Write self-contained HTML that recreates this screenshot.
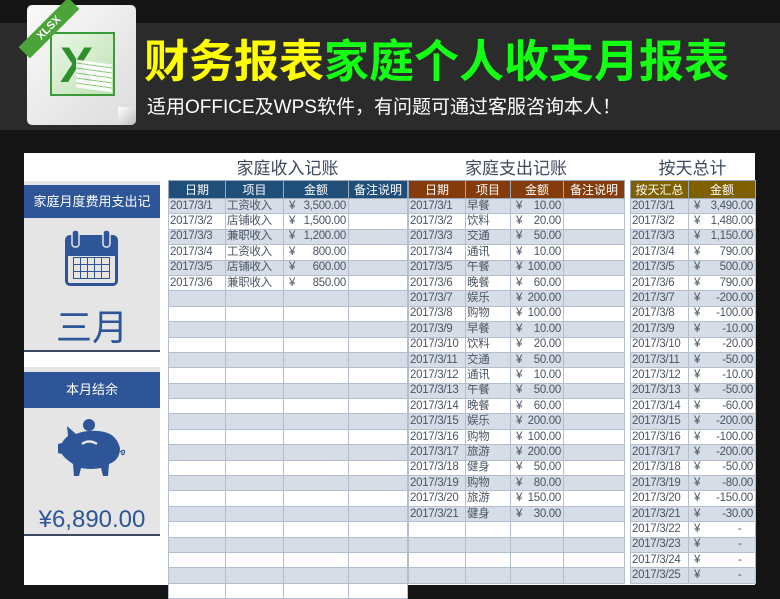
<!DOCTYPE html>
<html><head><meta charset="utf-8"><style>
*{margin:0;padding:0;box-sizing:border-box}
body{width:780px;height:585px;overflow:hidden;background:#151515;font-family:"Liberation Sans","Noto Sans CJK SC",sans-serif;position:relative}
.band{position:absolute;left:0;top:23px;width:780px;height:107px;background:#2b2b2b}
.abs{position:absolute}
table{border-collapse:collapse;table-layout:fixed;position:absolute;font-size:11.5px;letter-spacing:-0.3px;color:#4a5564}
td{height:15.4px;border:1px solid #b3bfcf;padding:0 1px;white-space:nowrap;line-height:13px;overflow:hidden}
th{height:17px;border:1px solid #9aa8ba;color:#fff;font-weight:normal;font-size:12px;letter-spacing:0}
tr:nth-child(even) td{background:#d6dde6}
tr:nth-child(odd) td{background:#fff}
.r{text-align:right;padding-right:2px}
.y{float:left;padding-left:4px}
.ttl{position:absolute;top:154px;font-size:17px;color:#3d4a5c;text-align:center}
</style></head><body>
<div class="band"></div>
<div class="abs" style="left:27px;top:5px;width:109px;height:120px;background:linear-gradient(135deg,#fafafa,#dcdcdc);border-radius:5px"></div>
<div class="abs" style="left:50px;top:32px;width:65px;height:64px;background:linear-gradient(135deg,#eaf6e6,#bfe2b2);border:2px solid #3d9a3a"></div>
<div class="abs" style="left:60px;top:36px;font:bold 50px 'Liberation Sans',sans-serif;color:#2f8f2a">X</div>
<div class="abs" style="left:76px;top:62px;width:36px;height:28px;background:repeating-linear-gradient(0deg,#fff 0 4px,#8cc67f 4px 5px);transform:skewY(8deg);opacity:.9"></div>
<div class="abs" style="left:14px;top:20px;width:70px;height:16px;background:#4aa43a;transform:rotate(-45deg);color:#fff;font:bold 11px 'Liberation Sans',sans-serif;text-align:center;line-height:16px">XLSX</div>
<div class="abs" style="left:118px;top:107px;width:18px;height:18px;background:linear-gradient(135deg,#fff,#bdbdbd);border-radius:0 0 5px 0"></div>
<div class="abs" style="left:144px;top:32px;font-size:45px;font-weight:bold;line-height:60px;white-space:nowrap"><span style="color:#ffff00">财务报表</span><span style="color:#13ff13">家庭个人收支月报表</span></div>
<div class="abs" style="left:147px;top:92px;font-size:19px;color:#fff;white-space:nowrap">适用OFFICE及WPS软件，有问题可通过客服咨询本人！</div>
<div class="abs" style="left:24px;top:153px;width:731px;height:432px;background:#fff"></div>
<div class="ttl" style="left:168px;width:239px">家庭收入记账</div>
<div class="ttl" style="left:408px;width:216px">家庭支出记账</div>
<div class="ttl" style="left:630px;width:125px">按天总计</div>
<div class="abs" style="left:24px;top:181px;width:136px;height:170px;background:#e5e5e5"></div>
<div class="abs" style="left:24px;top:185px;width:136px;height:33px;background:#2d5597;color:#fff;font-size:13px;text-align:center;line-height:33px">家庭月度费用支出记</div>
<svg class="abs" style="left:64px;top:229px" width="55" height="58" viewBox="0 0 55 58">
<rect x="1" y="6" width="53" height="51" rx="5" fill="#2d5597"/>
<rect x="4" y="25" width="47" height="29" rx="2" fill="#e5e5e5"/>
<rect x="8" y="1" width="7" height="17" rx="3" fill="#2d5597" stroke="#e5e5e5" stroke-width="1.5"/>
<rect x="39" y="1" width="7" height="17" rx="3" fill="#2d5597" stroke="#e5e5e5" stroke-width="1.5"/>
<g fill="#2d5597"><rect x="4" y="25" width="47" height="2"/><rect x="9" y="28" width="37" height="22"/></g>
<g fill="#e5e5e5">
<rect x="10" y="29" width="6" height="6"/><rect x="17" y="29" width="6" height="6"/><rect x="24" y="29" width="6" height="6"/><rect x="31" y="29" width="6" height="6"/><rect x="38" y="29" width="7" height="6"/>
<rect x="10" y="36" width="6" height="6"/><rect x="17" y="36" width="6" height="6"/><rect x="24" y="36" width="6" height="6"/><rect x="31" y="36" width="6" height="6"/><rect x="38" y="36" width="7" height="6"/>
<rect x="10" y="43" width="6" height="6"/><rect x="17" y="43" width="6" height="6"/><rect x="24" y="43" width="6" height="6"/><rect x="31" y="43" width="6" height="6"/><rect x="38" y="43" width="7" height="6"/>
</g></svg>
<div class="abs" style="left:24px;top:306px;width:136px;text-align:center;font-size:36px;color:#2d5597;line-height:44px">三月</div>
<div class="abs" style="left:24px;top:350px;width:136px;height:2px;background:#3b4a60"></div>
<div class="abs" style="left:24px;top:367px;width:136px;height:168px;background:#e5e5e5"></div>
<div class="abs" style="left:24px;top:372px;width:136px;height:36px;background:#2d5597;color:#fff;font-size:13px;text-align:center;line-height:36px">本月结余</div>
<svg class="abs" style="left:56px;top:418px" width="74" height="62" viewBox="0 0 74 62">
<circle cx="33" cy="7" r="6" fill="#2d5597"/>
<path d="M12 18 L11 8 L20 16 Q30 12 42 13 Q60 14 64 30 Q64 42 53 46 L52 58 L47 58 L45 50 Q35 52 25 50 L23 58 L18 58 L17 46 Q8 40 6 36 L2 35 L2 26 L6 25 Q8 21 12 18Z" fill="#2d5597"/>
<path d="M26 26 Q33 21 41 26" stroke="#e5e5e5" stroke-width="2.5" fill="none"/>
<path d="M64 34 Q70 30 68 36 Q65 38 66 34" stroke="#2d5597" stroke-width="1.2" fill="none"/>
</svg>
<div class="abs" style="left:24px;top:505px;width:136px;text-align:center;font-size:24px;color:#2d5597;line-height:30px">¥6,890.00</div>
<div class="abs" style="left:24px;top:534px;width:136px;height:2px;background:#3b4a60"></div>

<table style="left:168px;top:180px;width:239px">
<colgroup><col style="width:57px"><col style="width:58px"><col style="width:65px"><col style="width:59px"></colgroup>
<tr><th style="background:#1f4e79">日期</th><th style="background:#1f4e79">项目</th><th style="background:#1f4e79">金额</th><th style="background:#1f4e79">备注说明</th></tr>
<tr><td>2017/3/1</td><td>工资收入</td><td class="r"><span class="y">¥</span>3,500.00</td><td></td></tr>
<tr><td>2017/3/2</td><td>店铺收入</td><td class="r"><span class="y">¥</span>1,500.00</td><td></td></tr>
<tr><td>2017/3/3</td><td>兼职收入</td><td class="r"><span class="y">¥</span>1,200.00</td><td></td></tr>
<tr><td>2017/3/4</td><td>工资收入</td><td class="r"><span class="y">¥</span>800.00</td><td></td></tr>
<tr><td>2017/3/5</td><td>店铺收入</td><td class="r"><span class="y">¥</span>600.00</td><td></td></tr>
<tr><td>2017/3/6</td><td>兼职收入</td><td class="r"><span class="y">¥</span>850.00</td><td></td></tr>
<tr><td></td><td></td><td></td><td></td></tr><tr><td></td><td></td><td></td><td></td></tr><tr><td></td><td></td><td></td><td></td></tr><tr><td></td><td></td><td></td><td></td></tr>
<tr><td></td><td></td><td></td><td></td></tr><tr><td></td><td></td><td></td><td></td></tr><tr><td></td><td></td><td></td><td></td></tr><tr><td></td><td></td><td></td><td></td></tr>
<tr><td></td><td></td><td></td><td></td></tr><tr><td></td><td></td><td></td><td></td></tr><tr><td></td><td></td><td></td><td></td></tr><tr><td></td><td></td><td></td><td></td></tr>
<tr><td></td><td></td><td></td><td></td></tr><tr><td></td><td></td><td></td><td></td></tr><tr><td></td><td></td><td></td><td></td></tr><tr><td></td><td></td><td></td><td></td></tr>
<tr><td></td><td></td><td></td><td></td></tr><tr><td></td><td></td><td></td><td></td></tr><tr><td></td><td></td><td></td><td></td></tr><tr><td></td><td></td><td></td><td></td></tr>
</table>

<table style="left:408px;top:180px;width:216px">
<colgroup><col style="width:57px"><col style="width:45px"><col style="width:53px"><col style="width:61px"></colgroup>
<tr><th style="background:#843c0c">日期</th><th style="background:#843c0c">项目</th><th style="background:#843c0c">金额</th><th style="background:#843c0c">备注说明</th></tr>
<tr><td>2017/3/1</td><td>早餐</td><td class="r"><span class="y">¥</span>10.00</td><td></td></tr>
<tr><td>2017/3/2</td><td>饮料</td><td class="r"><span class="y">¥</span>20.00</td><td></td></tr>
<tr><td>2017/3/3</td><td>交通</td><td class="r"><span class="y">¥</span>50.00</td><td></td></tr>
<tr><td>2017/3/4</td><td>通讯</td><td class="r"><span class="y">¥</span>10.00</td><td></td></tr>
<tr><td>2017/3/5</td><td>午餐</td><td class="r"><span class="y">¥</span>100.00</td><td></td></tr>
<tr><td>2017/3/6</td><td>晚餐</td><td class="r"><span class="y">¥</span>60.00</td><td></td></tr>
<tr><td>2017/3/7</td><td>娱乐</td><td class="r"><span class="y">¥</span>200.00</td><td></td></tr>
<tr><td>2017/3/8</td><td>购物</td><td class="r"><span class="y">¥</span>100.00</td><td></td></tr>
<tr><td>2017/3/9</td><td>早餐</td><td class="r"><span class="y">¥</span>10.00</td><td></td></tr>
<tr><td>2017/3/10</td><td>饮料</td><td class="r"><span class="y">¥</span>20.00</td><td></td></tr>
<tr><td>2017/3/11</td><td>交通</td><td class="r"><span class="y">¥</span>50.00</td><td></td></tr>
<tr><td>2017/3/12</td><td>通讯</td><td class="r"><span class="y">¥</span>10.00</td><td></td></tr>
<tr><td>2017/3/13</td><td>午餐</td><td class="r"><span class="y">¥</span>50.00</td><td></td></tr>
<tr><td>2017/3/14</td><td>晚餐</td><td class="r"><span class="y">¥</span>60.00</td><td></td></tr>
<tr><td>2017/3/15</td><td>娱乐</td><td class="r"><span class="y">¥</span>200.00</td><td></td></tr>
<tr><td>2017/3/16</td><td>购物</td><td class="r"><span class="y">¥</span>100.00</td><td></td></tr>
<tr><td>2017/3/17</td><td>旅游</td><td class="r"><span class="y">¥</span>200.00</td><td></td></tr>
<tr><td>2017/3/18</td><td>健身</td><td class="r"><span class="y">¥</span>50.00</td><td></td></tr>
<tr><td>2017/3/19</td><td>购物</td><td class="r"><span class="y">¥</span>80.00</td><td></td></tr>
<tr><td>2017/3/20</td><td>旅游</td><td class="r"><span class="y">¥</span>150.00</td><td></td></tr>
<tr><td>2017/3/21</td><td>健身</td><td class="r"><span class="y">¥</span>30.00</td><td></td></tr>
<tr><td></td><td></td><td></td><td></td></tr><tr><td></td><td></td><td></td><td></td></tr><tr><td></td><td></td><td></td><td></td></tr><tr><td></td><td></td><td></td><td></td></tr>
</table>

<table style="left:630px;top:180px;width:125px">
<colgroup><col style="width:58px"><col style="width:67px"></colgroup>
<tr><th style="background:#7f6000">按天汇总</th><th style="background:#7f6000">金额</th></tr>
<tr><td>2017/3/1</td><td class="r"><span class="y">¥</span>3,490.00</td></tr>
<tr><td>2017/3/2</td><td class="r"><span class="y">¥</span>1,480.00</td></tr>
<tr><td>2017/3/3</td><td class="r"><span class="y">¥</span>1,150.00</td></tr>
<tr><td>2017/3/4</td><td class="r"><span class="y">¥</span>790.00</td></tr>
<tr><td>2017/3/5</td><td class="r"><span class="y">¥</span>500.00</td></tr>
<tr><td>2017/3/6</td><td class="r"><span class="y">¥</span>790.00</td></tr>
<tr><td>2017/3/7</td><td class="r"><span class="y">¥</span>-200.00</td></tr>
<tr><td>2017/3/8</td><td class="r"><span class="y">¥</span>-100.00</td></tr>
<tr><td>2017/3/9</td><td class="r"><span class="y">¥</span>-10.00</td></tr>
<tr><td>2017/3/10</td><td class="r"><span class="y">¥</span>-20.00</td></tr>
<tr><td>2017/3/11</td><td class="r"><span class="y">¥</span>-50.00</td></tr>
<tr><td>2017/3/12</td><td class="r"><span class="y">¥</span>-10.00</td></tr>
<tr><td>2017/3/13</td><td class="r"><span class="y">¥</span>-50.00</td></tr>
<tr><td>2017/3/14</td><td class="r"><span class="y">¥</span>-60.00</td></tr>
<tr><td>2017/3/15</td><td class="r"><span class="y">¥</span>-200.00</td></tr>
<tr><td>2017/3/16</td><td class="r"><span class="y">¥</span>-100.00</td></tr>
<tr><td>2017/3/17</td><td class="r"><span class="y">¥</span>-200.00</td></tr>
<tr><td>2017/3/18</td><td class="r"><span class="y">¥</span>-50.00</td></tr>
<tr><td>2017/3/19</td><td class="r"><span class="y">¥</span>-80.00</td></tr>
<tr><td>2017/3/20</td><td class="r"><span class="y">¥</span>-150.00</td></tr>
<tr><td>2017/3/21</td><td class="r"><span class="y">¥</span>-30.00</td></tr>
<tr><td>2017/3/22</td><td class="r"><span class="y">¥</span>-&nbsp;&nbsp;&nbsp;&nbsp;</td></tr>
<tr><td>2017/3/23</td><td class="r"><span class="y">¥</span>-&nbsp;&nbsp;&nbsp;&nbsp;</td></tr>
<tr><td>2017/3/24</td><td class="r"><span class="y">¥</span>-&nbsp;&nbsp;&nbsp;&nbsp;</td></tr>
<tr><td>2017/3/25</td><td class="r"><span class="y">¥</span>-&nbsp;&nbsp;&nbsp;&nbsp;</td></tr>
</table>
</body></html>
